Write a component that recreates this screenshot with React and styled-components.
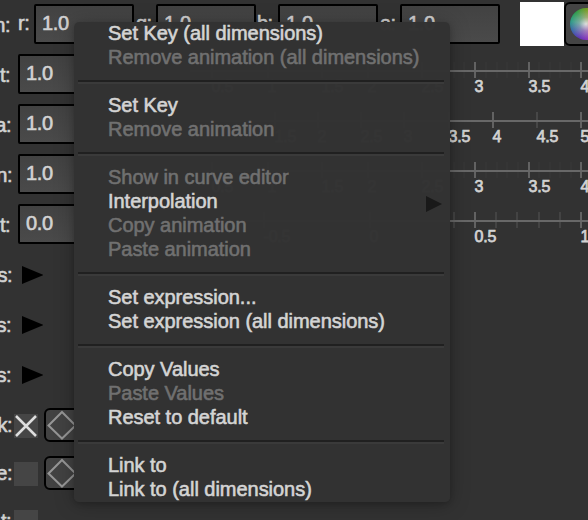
import React from "react";
import styled, { createGlobalStyle } from "styled-components";

const Global = createGlobalStyle`
  * { box-sizing: border-box; }
  body { margin: 0; background: #323232; overflow: hidden; }
`;

const Page = styled.main`
  position: relative;
  width: 588px;
  height: 520px;
  overflow: hidden;
  background: #323232;
  color: #d2d2d2;
  font: 20px/24px "Liberation Sans", Arial, sans-serif;
  -webkit-text-stroke: 0.6px currentColor;
`;

const Row = styled.div`
  display: flex;
  height: ${(p) => p.$h || 50}px;
  padding-top: ${(p) => p.$top || 0}px;
  white-space: nowrap;
`;

const Label = styled.span`
  flex: none;
  display: flex;
  justify-content: flex-end;
  width: ${(p) => p.$w || 12}px;
  margin-right: ${(p) => p.$gap ?? 6}px;
  padding-top: ${(p) => p.$top ?? 9}px;
  letter-spacing: -0.5px;
`;

const Channel = styled.span`
  flex: none;
  width: ${(p) => p.$w}px;
  padding: 7px 0 0 ${(p) => p.$indent || 0}px;
  letter-spacing: -0.5px;
`;

const Field = styled.div`
  flex: none;
  width: 100px;
  height: 40px;
  padding: 5px 0 0 6px;
  border: 2px solid #000;
  border-radius: 2px;
  background: linear-gradient(#424242, #4a4a4a);
  letter-spacing: -0.3px;
`;

const Swatch = styled.div`
  flex: none;
  width: 44px;
  height: 44px;
  margin: -2px 0 0 20px;
  background: #fff;
`;

const ColorButton = styled.div`
  flex: none;
  display: flex;
  align-items: center;
  width: 50px;
  height: 44px;
  margin: -2px 0 0 0;
  padding-left: 4px;
  border: 2px solid #000;
  border-radius: 6px;
  background: #444;
`;

const Wheel = styled.div`
  width: 32px;
  height: 32px;
  border-radius: 50%;
  background:
    radial-gradient(circle, #ddd 0, #bbb8 30%, transparent 68%),
    conic-gradient(#6f9a20, #c1a52d 50deg, #ca4343 110deg, #9c36bb 160deg, #6234b8 205deg, #3a68a8 245deg, #2f9c88 280deg, #2f9c4c 320deg, #6f9a20);
`;

const Ruler = styled.svg`
  flex: none;
  width: 470px;
  height: 50px;
  margin-top: -4px;
  text {
    font: 16px "Liberation Sans", Arial, sans-serif;
    fill: #d2d2d2;
    -webkit-text-stroke: 0;
    stroke: #d2d2d2;
    stroke-width: 0.75px;
    letter-spacing: -0.2px;
  }
`;

const Expander = styled.svg`
  width: 22px;
  height: 20px;
  margin: 15px 0 0 ${(p) => p.$left}px;
`;

const Check = styled.div`
  flex: none;
  width: 24px;
  height: 24px;
  margin-top: 12px;
  background: #454545;
  svg { display: block; }
`;

const KeyButton = styled.div`
  flex: none;
  width: 36px;
  height: 34px;
  margin: 6px 0 0 6px;
  border: 2px solid #000;
  border-radius: 6px;
  background: #424242;
  svg { display: block; }
`;

const Menu = styled.nav`
  position: absolute;
  left: 74px;
  top: 22px;
  width: 376px;
  height: 480px;
  border-radius: 5px;
  background: rgba(50, 50, 50, 0.992);
  box-shadow: 0 2px 20px rgba(0, 0, 0, 0.28), 0 2px 5px rgba(0, 0, 0, 0.16);
`;

const Item = styled.div`
  display: flex;
  justify-content: space-between;
  height: 24px;
  padding: 0 8px 0 34px;
  line-height: 23px;
  white-space: nowrap;
  letter-spacing: -0.03px;
  color: ${(p) => (p.$off ? "#707070" : "#d4d4d4")};
`;

const Separator = styled.div`
  height: 24px;
  padding: 10px 6px 0 4px;
  &::before {
    content: "";
    display: block;
    height: 4px;
    background: linear-gradient(#202020 50%, #3a3a3a 50%);
  }
`;

const SubArrow = styled.svg`
  width: 16px;
  height: 16px;
  margin-top: 6px;
`;

const rulers = {
  a: [[212, "0.5"], [268, "1"], [322, "1.5"], [368, "2"], [422, "2.5"], [475, "3"], [529, "3.5"], [581, "4"]],
  b: [[275, "1.5"], [318, "2"], [361, "2.5"], [404, "3"], [449, "3.5"], [493, "4"], [537, "4.5"], [581, "5"]],
  c: [[264, "-0.5"], [370, "0"], [475, "0.5"], [581, "1"]],
};

function Scale({ kind }) {
  const marks = rulers[kind];
  const parts = kind === "b" ? 1 : 5;
  return (
    <Ruler viewBox="118 0 470 50">
      {marks.map(([x, t], i) => {
        const gap = i ? x - marks[i - 1][0] : 0;
        return (
          <g key={t}>
            {i > 0 && Array.from({ length: parts - 1 }, (_, k) => (
              <path key={k} d={`M${Math.round(x - (gap * (k + 1)) / parts)} 12v16`} stroke={kind === "c" ? "#434343" : "#353535"} strokeWidth="2" />
            ))}
            <path d={`M${x} 12v16`} stroke={t === "4.5" ? "#474747" : "#626262"} strokeWidth="2" />
            <text x={x - 0.5} y="42">{t}</text>
          </g>
        );
      })}
      <path d="M190 21H588" stroke="#686868" strokeWidth="2" />
    </Ruler>
  );
}

const Diamond = () => (
  <svg width="32" height="30" viewBox="0 0 32 30" fill="none" stroke="#969696" strokeWidth="2">
    <path d="M16 2L29.5 15.5L16 28.5L2.5 15.5Z" />
  </svg>
);

const params = [
  { label: "t:", w: 10, value: "1.0", kind: "a" },
  { label: "a:", w: 11, value: "1.0", kind: "b" },
  { label: "n:", w: 12, value: "1.0", kind: "a" },
  { label: "t:", w: 10, value: "0.0", kind: "c" },
];

const groups = [12, 11, 11];

const items = [
  ["Set Key (all dimensions)"],
  ["Remove animation (all dimensions)", true],
  null,
  ["Set Key"],
  ["Remove animation", true],
  null,
  ["Show in curve editor", true],
  ["Interpolation"],
  ["Copy animation", true],
  ["Paste animation", true],
  null,
  ["Set expression..."],
  ["Set expression (all dimensions)"],
  null,
  ["Copy Values"],
  ["Paste Values", true],
  ["Reset to default"],
  null,
  ["Link to"],
  ["Link to (all dimensions)"],
];

export default function App() {
  return (
    <Page>
      <Global />
      <Row $top={4}>
        <Label $w={10} $gap={8}>n:</Label>
        <Channel $w={16}>r:</Channel>
        <Field>1.0</Field>
        <Channel $w={22} $indent={2}>g:</Channel>
        <Field>1.0</Field>
        <Channel $w={22} $indent={1}>b:</Channel>
        <Field>1.0</Field>
        <Channel $w={22} $indent={2}>a:</Channel>
        <Field>1.0</Field>
        <Swatch />
        <ColorButton><Wheel /></ColorButton>
      </Row>
      {params.map((p, i) => (
        <Row key={i} $top={4}>
          <Label $w={p.w} $gap={18 - p.w}>{p.label}</Label>
          <Field>{p.value}</Field>
          <Scale kind={p.kind} />
        </Row>
      ))}
      {groups.map((w, i) => (
        <Row key={i}>
          <Label $w={w} $gap={0} $top={13}>s:</Label>
          <Expander $left={21 - w} viewBox="0 0 22 20"><path d="M1 1L22.5 10L1 19Z" fill="#000" /></Expander>
        </Row>
      ))}
      {["k:", "e:", "t:"].map((l, i) => (
        <Row key={l} $h={48} $top={2}>
          <Label $w={i === 2 ? 11 : 12} $gap={i === 2 ? 3 : 2} $top={11}>{l}</Label>
          <Check>
            {i === 0 && (
              <svg width="24" height="24" viewBox="0 0 24 24"><path d="M2 2L22 22M22 2L2 22" stroke="#ddd" strokeWidth="2.5" /></svg>
            )}
          </Check>
          {i < 2 && <KeyButton><Diamond /></KeyButton>}
        </Row>
      ))}
      <Menu>
        {items.map((it, i) => it ? (
          <Item key={i} $off={it[1]}>
            <span>{it[0]}</span>
            {it[0] === "Interpolation" && (
              <SubArrow viewBox="0 0 16 16"><path d="M0 0L16 8L0 16Z" fill="#191919" /></SubArrow>
            )}
          </Item>
        ) : <Separator key={i} />)}
      </Menu>
    </Page>
  );
}
